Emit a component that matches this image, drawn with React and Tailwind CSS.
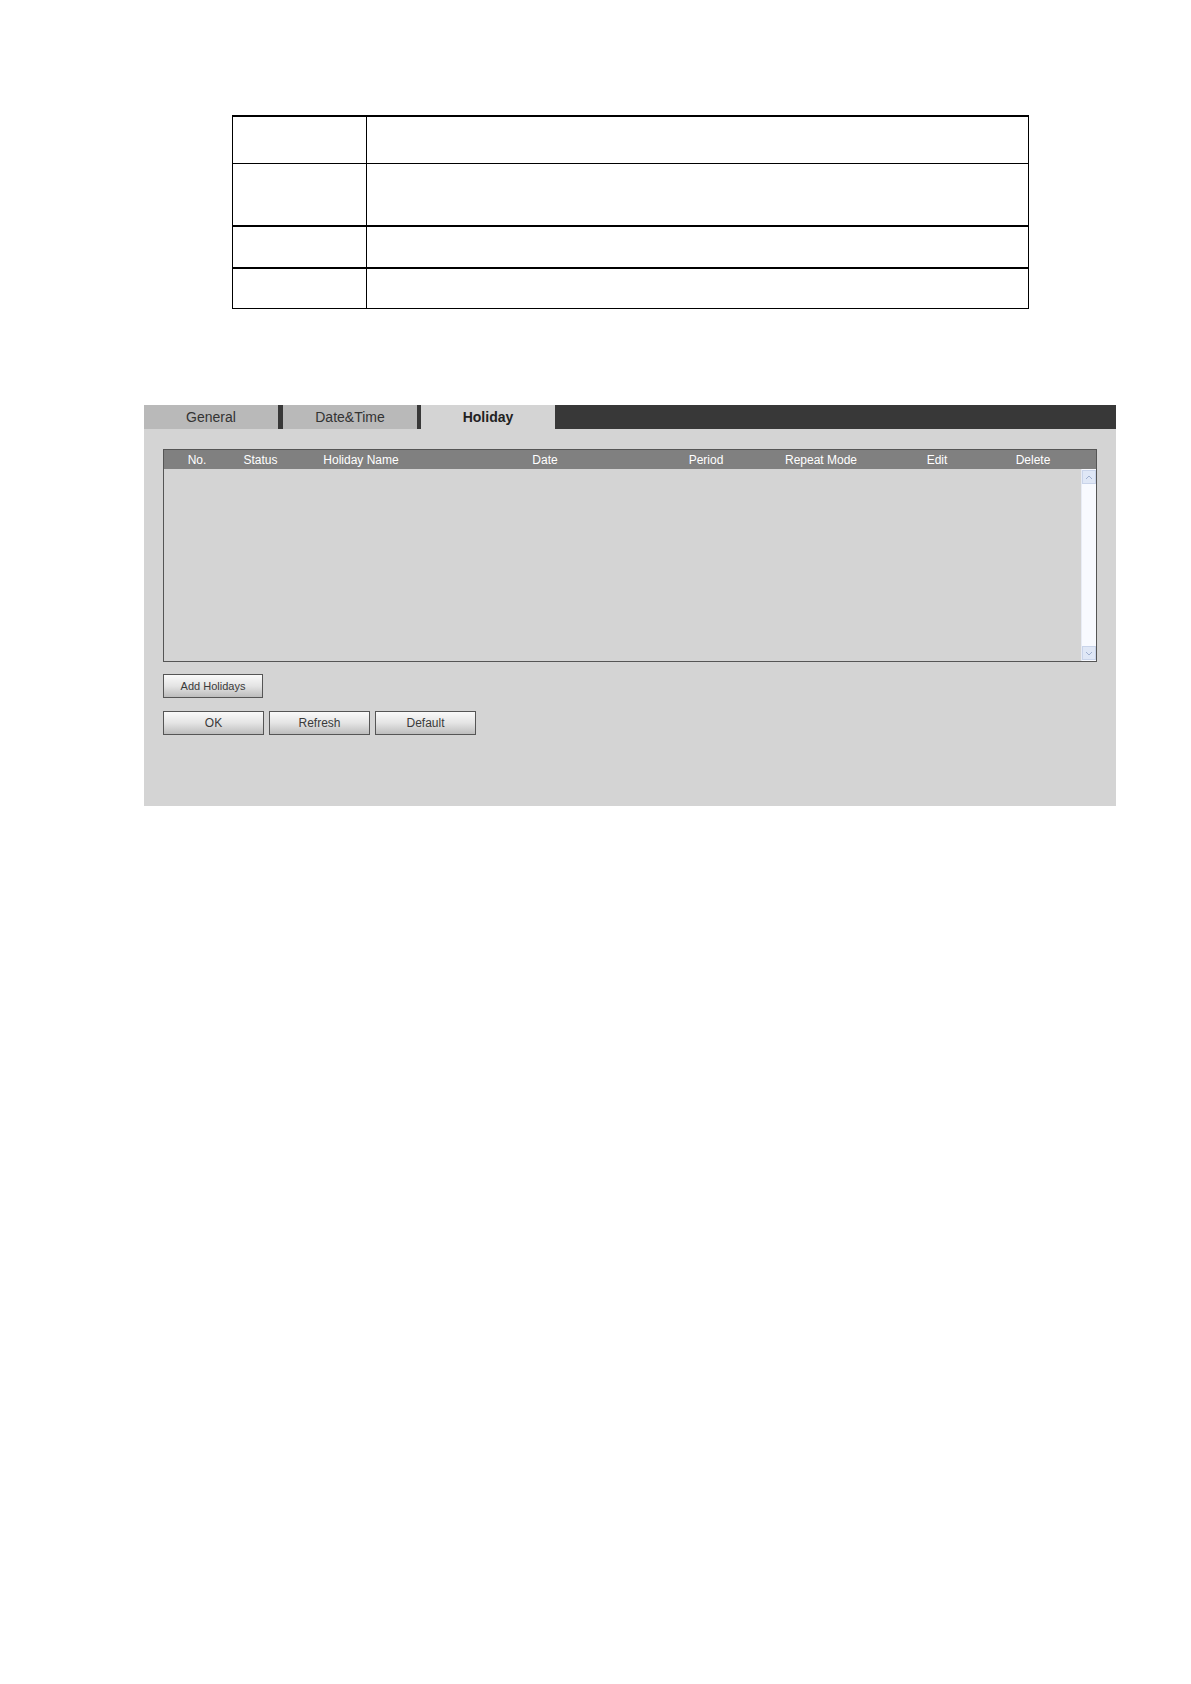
import React from "react"

const cols = [
  { label: "No.", w: "w-[66px]" },
  { label: "Status", w: "w-[61px]" },
  { label: "Holiday Name", w: "w-[140px]" },
  { label: "Date", w: "w-[228px]" },
  { label: "Period", w: "w-[94px]" },
  { label: "Repeat Mode", w: "w-[136px]" },
  { label: "Edit", w: "w-[96px]" },
  { label: "Delete", w: "w-[96px]" },
]

function Btn({ children }) {
  return (
    <button className="h-[24px] w-[101px] border border-[#555] bg-gradient-to-b from-[#fafafa] via-[#e4e4e4] to-[#bdbdbd] text-[12px] text-[#3a3a3a]">
      {children}
    </button>
  )
}

function Row({ h, bottom }) {
  return (
    <div className={`grid grid-cols-[133px_1px_1fr] ${h} ${bottom}`}>
      <div />
      <div className="bg-black" />
      <div />
    </div>
  )
}

export default function App() {
  return (
    <div className="min-h-[1684px] w-[1191px] bg-white font-['Liberation_Sans',Arial,sans-serif]">
      <div className="pt-[115px] pl-[232px]">
        <div className="w-[797px] border-x border-t-2 border-black">
          <Row h="h-[47px]" bottom="border-b border-black" />
          <Row h="h-[63px]" bottom="border-b-2 border-black" />
          <Row h="h-[42px]" bottom="border-b-2 border-black" />
          <Row h="h-[40px]" bottom="border-b border-black" />
        </div>
      </div>

      <div className="ml-[144px] mt-[96px] h-[401px] w-[972px] bg-[#d4d4d4]">
        <div className="flex h-[24px] bg-[#383838] text-[14px]">
          <div className="flex w-[134px] items-center justify-center bg-[#b9b9b9] text-[#333]">General</div>
          <div className="w-[5px]" />
          <div className="flex w-[134px] items-center justify-center bg-[#b9b9b9] text-[#333]">Date&amp;Time</div>
          <div className="w-[4px]" />
          <div className="flex w-[134px] items-center justify-center bg-[#d4d4d4] font-bold text-[#222]">Holiday</div>
        </div>

        <div className="px-[19px] pt-[20px]">
          <div className="border border-[#555]">
            <div className="flex h-[19px] items-center bg-[#808080] text-[12px] text-white">
              {cols.map((c) => (
                <div key={c.label} className={`${c.w} text-center`}>{c.label}</div>
              ))}
            </div>
            <div className="flex h-[192px] justify-end">
              <div className="flex w-[15px] flex-col justify-between border-l border-[#e8ecf5] bg-[#f8faff] py-[1px]">
                <div className="flex h-[14px] items-center justify-center border border-[#c9d4ea] bg-[#dfe7f6]">
                  <svg width="8" height="5" viewBox="0 0 8 5"><path d="M1 4 L4 1 L7 4" fill="none" stroke="#9fb0cf" strokeWidth="1" /></svg>
                </div>
                <div className="flex h-[14px] items-center justify-center border border-[#c9d4ea] bg-[#dfe7f6]">
                  <svg width="8" height="5" viewBox="0 0 8 5"><path d="M1 1 L4 4 L7 1" fill="none" stroke="#9fb0cf" strokeWidth="1" /></svg>
                </div>
              </div>
            </div>
          </div>

          <div className="mt-[11px]">
            <button className="h-[24px] w-[100px] border border-[#555] bg-gradient-to-b from-[#fafafa] via-[#e4e4e4] to-[#bdbdbd] text-[11px] text-[#3a3a3a]">
              Add Holidays
            </button>
          </div>
          <div className="mt-[13px] flex gap-[5px]">
            <Btn>OK</Btn>
            <Btn>Refresh</Btn>
            <Btn>Default</Btn>
          </div>
        </div>
      </div>
    </div>
  )
}
